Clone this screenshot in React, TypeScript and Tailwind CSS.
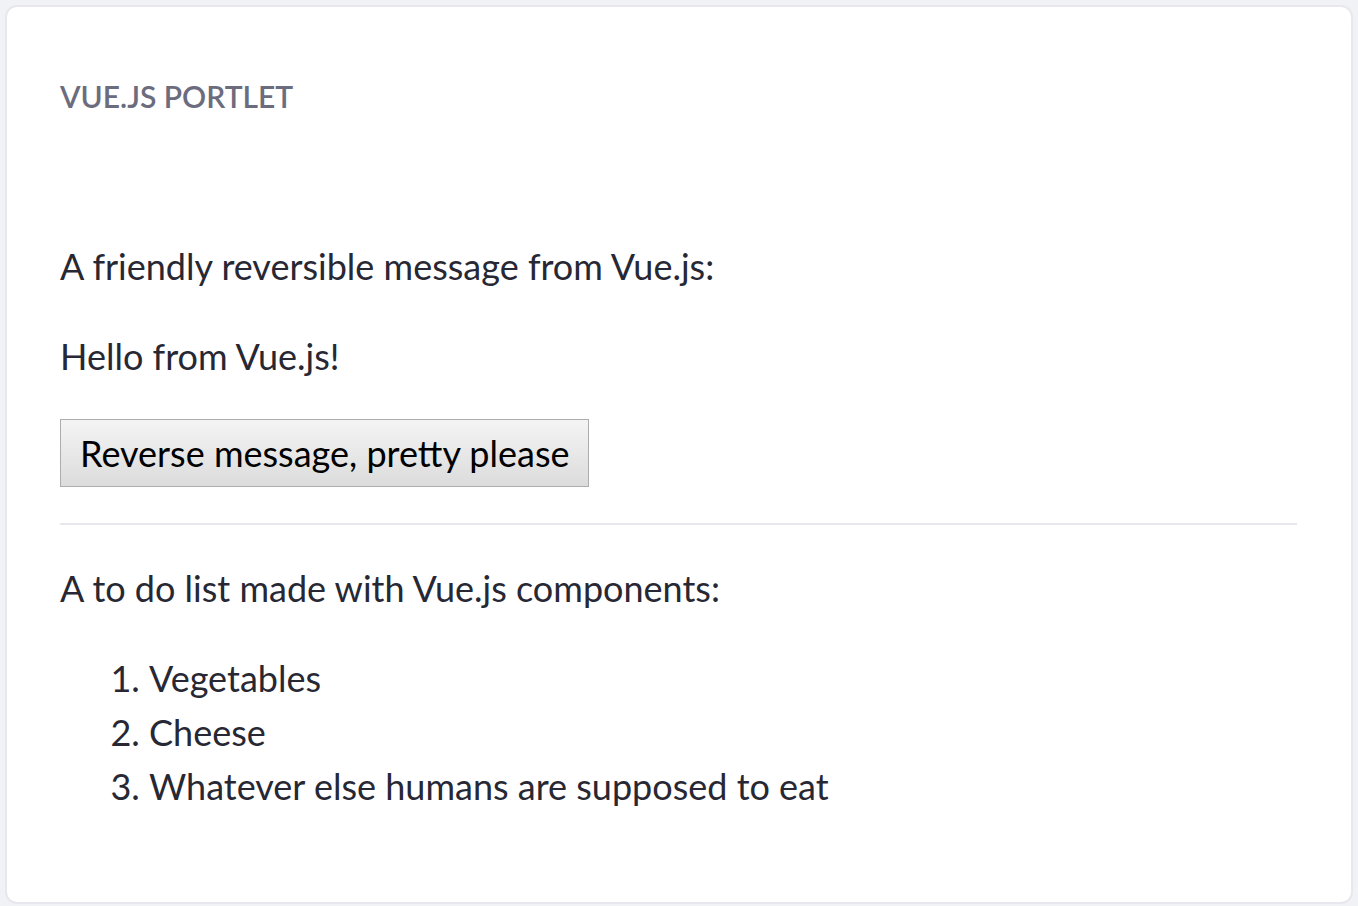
import React, { useState } from "react";

export default function App() {
  const [msg, setMsg] = useState("Hello from Vue.js!");
  const items = ["Vegetables", "Cheese", "Whatever else humans are supposed to eat"];
  return (
    <div className="min-h-screen bg-[#f1f2f5] p-[5px] font-['Lato',sans-serif]">
      <div className="rounded-[12px] border-2 border-[#e7e7ed] bg-white pb-[53px] pl-[53px] pr-[54px] pt-[71px] text-[#272833]">
        <h2 className="text-[30px] leading-[36px] font-semibold uppercase text-[#6b6c7e]">Vue.js Portlet</h2>
        <div className="mt-[125px]">
          <p className="mb-[36px] text-[36px] leading-[54px]">A friendly reversible message from Vue.js:</p>
          <p className="mb-[36px] text-[36px] leading-[54px]">{msg}</p>
          <button
            onClick={() => setMsg(msg.split("").reverse().join(""))}
            className="border border-[#adadad] bg-gradient-to-b from-[#f4f4f4] to-[#dcdcdc] px-[19px] py-[6px] text-[36px] leading-[54px] text-black"
          >
            Reverse message, pretty please
          </button>
          <hr className="my-[36px] border-t-2 border-[#e7e7ed]" />
          <p className="mb-[36px] text-[36px] leading-[54px]">A to do list made with Vue.js components:</p>
          <ol className="mb-[36px] list-decimal pl-[89px] text-[36px] leading-[54px]">
            {items.map((it) => (
              <li key={it}>{it}</li>
            ))}
          </ol>
        </div>
      </div>
    </div>
  );
}
